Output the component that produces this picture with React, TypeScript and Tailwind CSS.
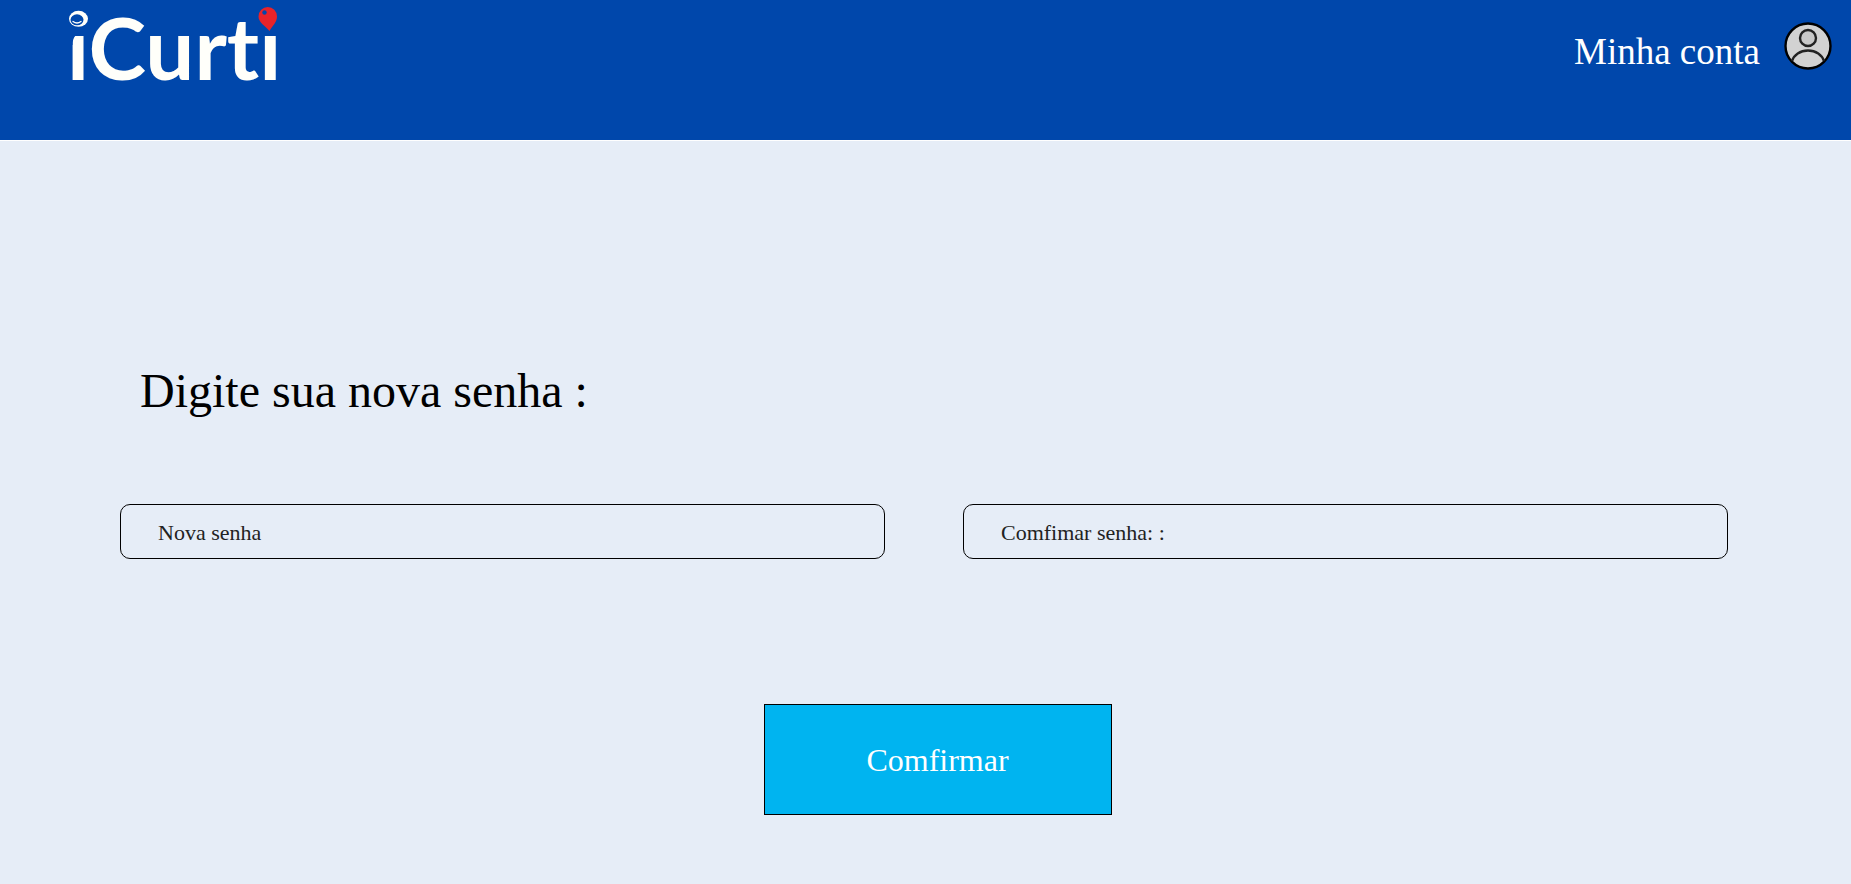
function Logo() {
  return (
    <svg className="h-24 w-60" viewBox="0 0 240 96" role="img" aria-label="iCurti">
      <text
        x="7"
        y="80"
        fill="#fffffa"
        fontSize="87"
        fontWeight="700"
        fontFamily="Lato, sans-serif"
        className="[font-variant-ligatures:none]"
      >
        iCurti
      </text>
      <rect x="6" y="8" width="22" height="24" fill="#0047ab" />
      <path d="M8 45V31H24C16.500 33 12.500 37 12.500 45z" fill="#0047ab" />
      <ellipse cx="18.500" cy="18.800" rx="9.500" ry="8" fill="#fffffa" />
      <ellipse cx="17" cy="19.800" rx="6.500" ry="5.500" fill="#0047ab" />
      <path d="M13 21.500q4 3 8 0" fill="none" stroke="#fffffa" strokeWidth="1.300" strokeLinecap="round" />
      <rect x="200" y="8" width="22" height="24" fill="#0047ab" />
      <path d="M198.500 16.500a9.200 9.500 0 0 1 18.500 0c0 6-4.500 9-7.500 14.500C205.500 26 198.500 22.500 198.500 16.500z" fill="#e8232a" />
      <circle cx="204.500" cy="12.500" r="2.200" fill="#0047ab" />
    </svg>
  );
}

function AccountIcon() {
  return (
    <svg className="size-12" viewBox="0 0 48 48" fill="none" aria-hidden="true">
      <circle cx="24" cy="24" r="22.500" fill="#d2d2d2" stroke="#000" strokeWidth="2.400" />
      <circle cx="24" cy="16" r="8" fill="#c8c8c8" stroke="#222" strokeWidth="2.400" />
      <path d="M8 39C10 33 16 28.500 24 28.500S38 33 40 39" stroke="#222" strokeWidth="2.400" />
    </svg>
  );
}

function PasswordField({ id, label }: { id: string; label: string }) {
  return (
    <input
      id={id}
      type="password"
      aria-label={label}
      placeholder={label}
      className="h-[55px] min-w-0 flex-1 rounded-[10px] border border-black bg-transparent px-[37px] pt-0.5 text-[22px] text-black placeholder:text-[#222]"
    />
  );
}

export default function App() {
  return (
    <div className="min-h-screen bg-[#e6edf7] font-['Liberation_Serif',serif] text-black">
      <header className="flex h-[141px] items-start justify-between border-b border-white bg-[#0047ab] pr-[19px] pl-[60px]">
        <a href="#inicio">
          <Logo />
        </a>
        <a href="#conta" className="flex items-start gap-6 pt-[22px] text-white">
          <span className="pt-2 text-[37px] leading-[44px]">Minha conta</span>
          <AccountIcon />
        </a>
      </header>
      <main className="px-[120px] pt-[220px]">
        <form onSubmit={(e) => e.preventDefault()}>
          <h1 className="pl-5 text-[48px] leading-[60px] font-medium">Digite sua nova senha :</h1>
          <div className="mt-[83px] mr-[3px] flex gap-[78px]">
            <PasswordField id="nova-senha" label="Nova senha" />
            <PasswordField id="confirmar-senha" label="Comfimar senha: :" />
          </div>
          <div className="mt-[145px] flex justify-center pl-6">
            <button type="submit" className="h-[111px] w-[348px] border border-black bg-[#00b4f0] text-[32px] text-white">
              Comfirmar
            </button>
          </div>
        </form>
      </main>
    </div>
  );
}
